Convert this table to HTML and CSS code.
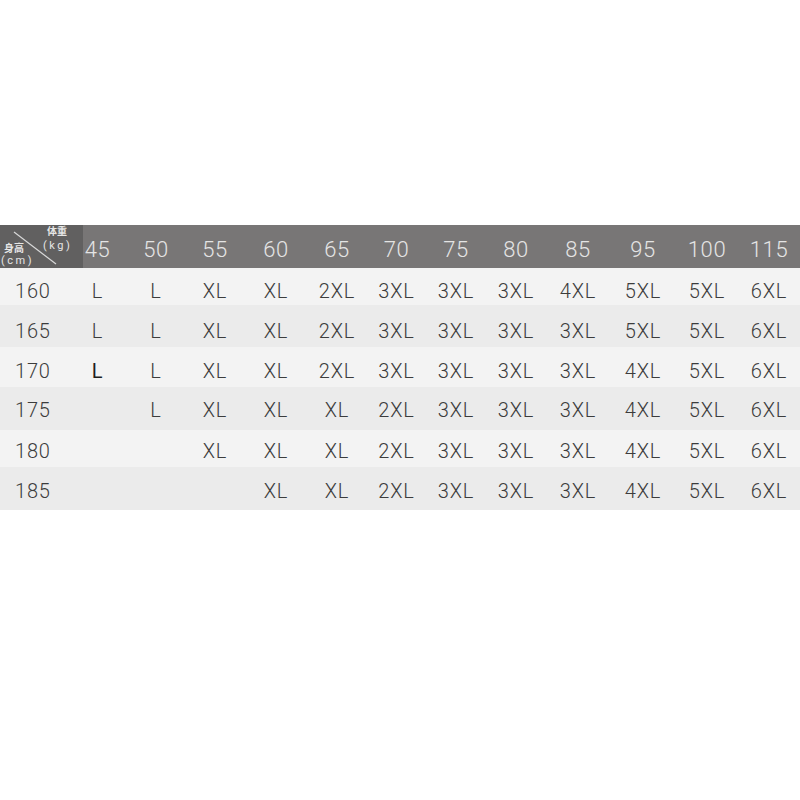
FILE: index.html
```html
<!DOCTYPE html>
<html lang="zh">
<head>
<meta charset="utf-8">
<title>尺码表</title>
<link rel="stylesheet" href="styles.css">
</head>
<body>
<div class="table">
  <div class="row head">
    <div class="corner">
      <svg class="diag" width="83" height="43" viewBox="0 0 83 43"><line x1="14" y1="7" x2="56" y2="39" stroke="#d9d9d9" stroke-width="1.2"/></svg>
      <span class="c-weight">体重</span>
      <span class="c-kg">(kg)</span>
      <span class="c-height">身高</span>
      <span class="c-cm">(cm)</span>
    </div>
    <div class="cell first">45</div><div class="cell">50</div><div class="cell">55</div><div class="cell">60</div><div class="cell">65</div><div class="cell">70</div><div class="cell">75</div><div class="cell">80</div><div class="cell">85</div><div class="cell">95</div><div class="cell">100</div><div class="cell">115</div>
  </div>
  <div class="row light r1">
    <div class="label">160</div>
    <div class="cell first">L</div><div class="cell">L</div><div class="cell">XL</div><div class="cell">XL</div><div class="cell">2XL</div><div class="cell">3XL</div><div class="cell">3XL</div><div class="cell">3XL</div><div class="cell">4XL</div><div class="cell">5XL</div><div class="cell">5XL</div><div class="cell">6XL</div>
  </div>
  <div class="row dark r2">
    <div class="label">165</div>
    <div class="cell first">L</div><div class="cell">L</div><div class="cell">XL</div><div class="cell">XL</div><div class="cell">2XL</div><div class="cell">3XL</div><div class="cell">3XL</div><div class="cell">3XL</div><div class="cell">3XL</div><div class="cell">5XL</div><div class="cell">5XL</div><div class="cell">6XL</div>
  </div>
  <div class="row light r3">
    <div class="label">170</div>
    <div class="cell first strong">L</div><div class="cell">L</div><div class="cell">XL</div><div class="cell">XL</div><div class="cell">2XL</div><div class="cell">3XL</div><div class="cell">3XL</div><div class="cell">3XL</div><div class="cell">3XL</div><div class="cell">4XL</div><div class="cell">5XL</div><div class="cell">6XL</div>
  </div>
  <div class="row dark r4">
    <div class="label">175</div>
    <div class="cell first"></div><div class="cell">L</div><div class="cell">XL</div><div class="cell">XL</div><div class="cell">XL</div><div class="cell">2XL</div><div class="cell">3XL</div><div class="cell">3XL</div><div class="cell">3XL</div><div class="cell">4XL</div><div class="cell">5XL</div><div class="cell">6XL</div>
  </div>
  <div class="row light r5">
    <div class="label">180</div>
    <div class="cell first"></div><div class="cell"></div><div class="cell">XL</div><div class="cell">XL</div><div class="cell">XL</div><div class="cell">2XL</div><div class="cell">3XL</div><div class="cell">3XL</div><div class="cell">3XL</div><div class="cell">4XL</div><div class="cell">5XL</div><div class="cell">6XL</div>
  </div>
  <div class="row dark r6">
    <div class="label">185</div>
    <div class="cell first"></div><div class="cell"></div><div class="cell"></div><div class="cell">XL</div><div class="cell">XL</div><div class="cell">2XL</div><div class="cell">3XL</div><div class="cell">3XL</div><div class="cell">3XL</div><div class="cell">4XL</div><div class="cell">5XL</div><div class="cell">6XL</div>
  </div>
</div>
</body>
</html>
```

FILE: styles.css
```css
html, body {
  margin: 0;
  padding: 0;
  background: #ffffff;
}

body {
  font-family: Roboto, "Liberation Sans", "Noto Sans CJK SC", sans-serif;
  font-weight: 300;
}

.table {
  margin-top: 225px;
  width: 800px;
}

.row {
  display: grid;
  grid-template-columns: 83px 44px 58px 60px 62px 60px 59px 60px 60px 64px 66px 62px 62px;
  align-items: center;
}

.head {
  height: 43px;
  background: #787676;
  color: #e4e4e4;
  font-size: 22px;
}

.head .cell {
  padding-top: 5px;
  letter-spacing: 0.6px;
}

.corner {
  position: relative;
  height: 43px;
  background: #616060;
  color: #e6e6e6;
  font-weight: 400;
  font-family: "Noto Sans CJK SC", Roboto, sans-serif;
  font-size: 10px;
  line-height: 1;
}

.diag {
  position: absolute;
  left: 0;
  top: 0;
}

.c-weight {
  position: absolute;
  left: 47px;
  top: 1px;
  font-weight: 700;
  font-size: 10px;
}

.c-kg {
  position: absolute;
  left: 43px;
  top: 15px;
  font-size: 11px;
  letter-spacing: 2.5px;
  font-family: Roboto, sans-serif;
}

.c-height {
  position: absolute;
  left: 4px;
  top: 18px;
  font-weight: 700;
  font-size: 10px;
}

.c-cm {
  position: absolute;
  left: 1px;
  top: 30px;
  font-size: 11px;
  letter-spacing: 2.5px;
  font-family: Roboto, sans-serif;
}

.light { background: #f3f3f3; }
.dark { background: #ebebeb; }

.r1 { height: 37px; }
.r2 { height: 42px; }
.r3 { height: 40px; }
.r4 { height: 43px; }
.r5 { height: 37px; }
.r6 { height: 43px; }

.row:not(.head) {
  color: #3c3c3c;
  font-size: 20px;
  letter-spacing: 0.8px;
}

.r1 > div { padding-top: 8px; }
.r2 > div { padding-top: 9px; }
.r3 > div { padding-top: 7px; }
.r4 > div { padding-top: 3px; }
.r5 > div { padding-top: 5px; }
.r6 > div { padding-top: 5px; }

.label {
  padding-left: 15px;
}

.cell {
  text-align: center;
}

.cell.first {
  padding-right: 15px;
}

.strong {
  font-weight: 400;
  color: #1e1e1e;
}
```
